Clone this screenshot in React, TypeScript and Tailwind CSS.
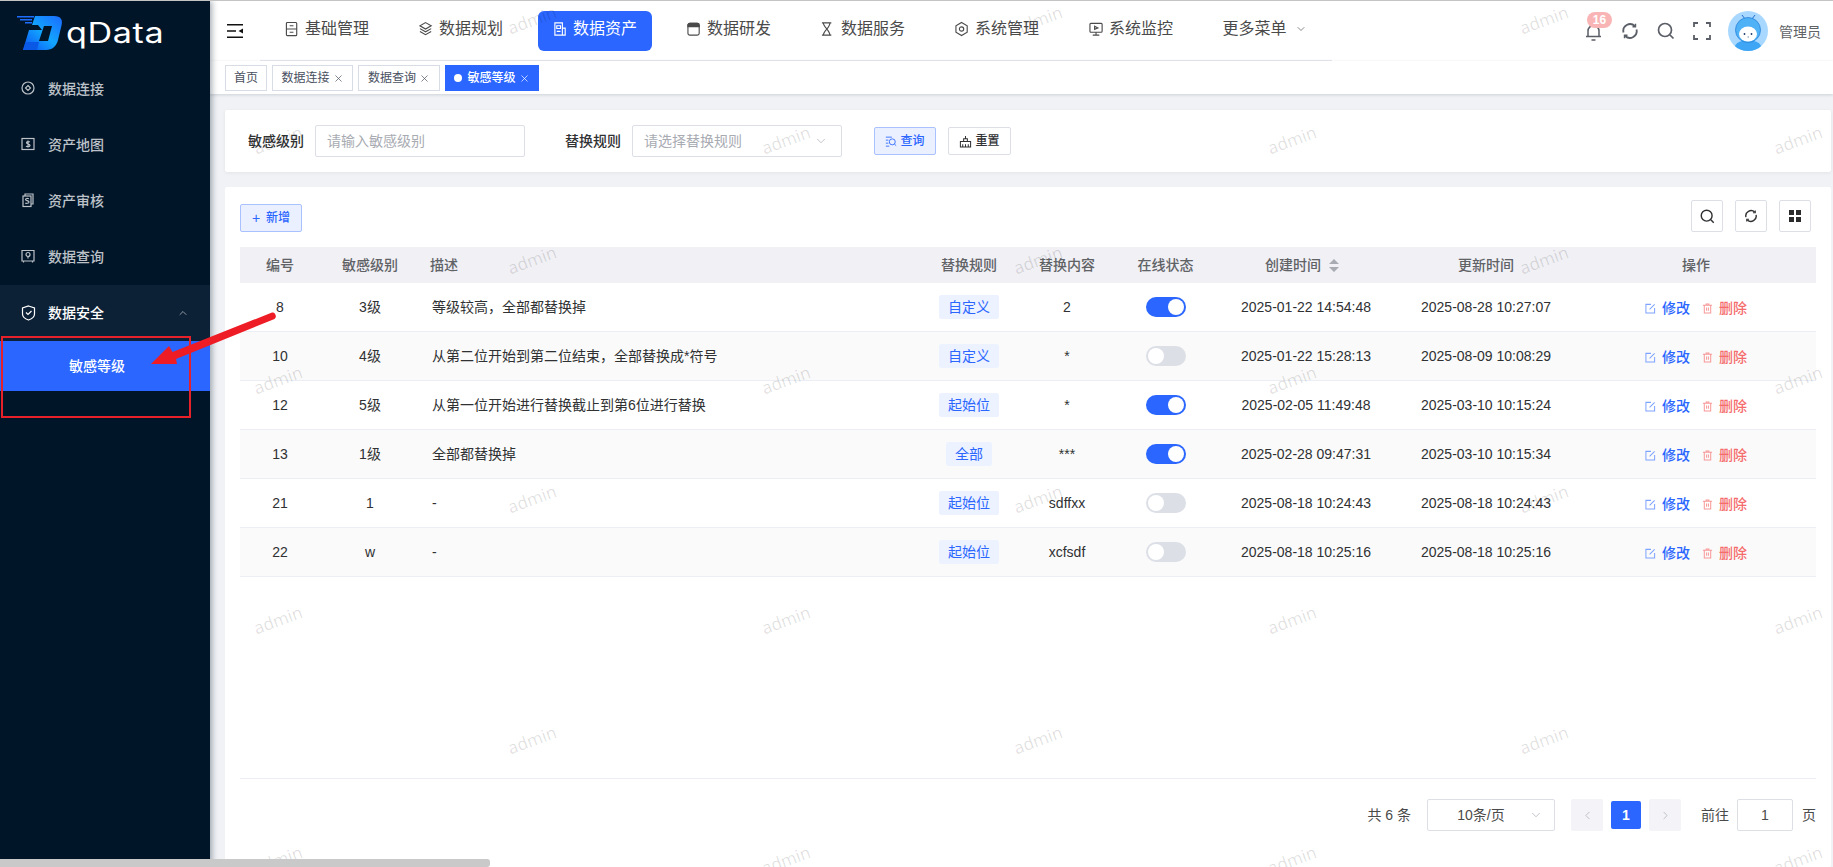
import type { ReactNode } from 'react';
import { ChevronDown, ChevronLeft, ChevronRight, ChevronUp, X } from 'lucide-react';

const navItems: { label: string; icon: ReactNode; active?: boolean }[] = [
  {
    label: '基础管理',
    icon: (
      <>
        <rect x="1.5" y="1" width="11" height="14" rx="1" />
        <path d="M1.5 8h11M5 4.5h4M5 11.5h4" />
      </>
    ),
  },
  {
    label: '数据规划',
    icon: <path d="M7 1.2 13 4.6 7 8 1 4.6ZM1 7.6 7 11 13 7.6M1 10.6 7 14 13 10.6" />,
  },
  {
    label: '数据资产',
    icon: (
      <>
        <path d="M10 14.5H2V1.5h8v13ZM10 7h3v7.5h-3" />
        <path d="M4 4.5h4v3H4ZM4 10.5h4" />
      </>
    ),
    active: true,
  },
  {
    label: '数据研发',
    icon: (
      <>
        <rect x="1" y="2" width="12" height="12.5" rx="2" />
        <path d="M1 5.5V4a2 2 0 0 1 2-2h8a2 2 0 0 1 2 2v1.5Z" fill="currentColor" />
      </>
    ),
  },
  {
    label: '数据服务',
    icon: <path d="M1 1.5h10M1 14.5h10M2.5 1.5c0 4 7 8 7 13M9.5 1.5c0 5-7 9-7 13" />,
  },
  {
    label: '系统管理',
    icon: (
      <>
        <path d="M7 1 13 4.5v7L7 15l-6-3.500v-7Z" />
        <circle cx="7" cy="8" r="2.300" />
      </>
    ),
  },
  {
    label: '系统监控',
    icon: (
      <>
        <rect x="1" y="2" width="13" height="9.500" rx="1" />
        <path d="M7.500 11.500V14.500M4 14.500h7M6 5l3.500 1.800L6 8.500Z" />
      </>
    ),
  },
];

const sideItems: { label: string; icon: ReactNode }[] = [
  {
    label: '数据连接',
    icon: (
      <>
        <circle cx="7" cy="7" r="6" />
        <path d="M7 4.500 9.500 7 7 9.500 4.500 7Z" />
      </>
    ),
  },
  {
    label: '资产地图',
    icon: (
      <>
        <rect x="1" y="1.500" width="12" height="11" />
        <path d="M8.800 5.200C8.300 4.500 5.500 4.300 5.500 5.800S9 7 9 8.500 5.700 10 5 9M7 3.500v7" />
      </>
    ),
  },
  {
    label: '资产审核',
    icon: (
      <>
        <path d="M4 3V1h8v10h-2" />
        <rect x="2" y="3" width="8" height="10.500" />
        <path d="M7.800 5.800C7 5.200 4.500 5.300 4.500 6.500S8 7.500 8 9 5 10.500 4.200 10" />
      </>
    ),
  },
  {
    label: '数据查询',
    icon: (
      <>
        <path d="M1 1.500h12v10.500H1ZM2.500 12v1.500M11.500 12v1.500" />
        <path d="M7 9.500V7.500" />
        <circle cx="7" cy="5.500" r="2" />
      </>
    ),
  },
];

type Row = {
  id: string;
  level: string;
  desc: string;
  rule: string;
  content: string;
  online: boolean;
  created: string;
  updated: string;
};

const rows: Row[] = [
  { id: '8', level: '3级', desc: '等级较高，全部都替换掉', rule: '自定义', content: '2', online: true, created: '2025-01-22 14:54:48', updated: '2025-08-28 10:27:07' },
  { id: '10', level: '4级', desc: '从第二位开始到第二位结束，全部替换成*符号', rule: '自定义', content: '*', online: false, created: '2025-01-22 15:28:13', updated: '2025-08-09 10:08:29' },
  { id: '12', level: '5级', desc: '从第一位开始进行替换截止到第6位进行替换', rule: '起始位', content: '*', online: true, created: '2025-02-05 11:49:48', updated: '2025-03-10 10:15:24' },
  { id: '13', level: '1级', desc: '全部都替换掉', rule: '全部', content: '***', online: true, created: '2025-02-28 09:47:31', updated: '2025-03-10 10:15:34' },
  { id: '21', level: '1', desc: '-', rule: '起始位', content: 'sdffxx', online: false, created: '2025-08-18 10:24:43', updated: '2025-08-18 10:24:43' },
  { id: '22', level: 'w', desc: '-', rule: '起始位', content: 'xcfsdf', online: false, created: '2025-08-18 10:25:16', updated: '2025-08-18 10:25:16' },
];

const watermarks = [19, 139, 259, 379, 498, 619, 739, 859].flatMap((y, i) =>
  (i % 2 === 0 ? [532, 1038, 1544] : [278, 786, 1292, 1798]).map((x) => ({ x, y }))
);

function Icon({ children, className }: { children: ReactNode; className?: string }) {
  return (
    <svg viewBox="0 0 16 16" fill="none" stroke="currentColor" strokeWidth="1.200" className={className}>
      {children}
    </svg>
  );
}

function RefreshIcon({ className }: { className?: string }) {
  return (
    <svg viewBox="0 0 18 18" fill="none" stroke="currentColor" strokeWidth="1.800" className={className}>
      <path d="M2.500 10.500A6.800 6.800 0 0 1 13.800 4M15.500 7.500A6.800 6.800 0 0 1 4.200 14" />
      <path d="M14.500 1.800v3h-3M3.500 16.200v-3h3" strokeWidth="1.400" />
    </svg>
  );
}

function SearchIcon({ className }: { className?: string }) {
  return (
    <svg viewBox="0 0 18 18" fill="none" stroke="currentColor" strokeWidth="1.700" className={className}>
      <circle cx="8" cy="8" r="6.500" />
      <path d="m13 13 3.500 3.500" />
    </svg>
  );
}

function Logo() {
  return (
    <svg viewBox="0 0 46 34" className="w-[46px] h-[34px]">
      <defs>
        <linearGradient id="logoGrad" x1="0" y1="1" x2="1" y2="0">
          <stop offset="0" stopColor="#0b4df0" />
          <stop offset="0.5" stopColor="#12a5ff" />
          <stop offset="1" stopColor="#1b6bff" />
        </linearGradient>
      </defs>
      <path d="M0 0h17v1.500H0ZM3 3h12v1.500H3ZM8 6h7v1.500H8Z" fill="#1d6dff" />
      <path d="M18 0h19c7 0 9 4 7.500 9.500L41 24c-1.500 6-5.500 10-12 10H6l6-20h13l-4-5h-6l3-9Z" fill="url(#logoGrad)" />
      <path d="M27 10h8l-4 15h-9Z" fill="#011528" />
      <path d="M6 34h14l2-8H8.500Z" fill="#0a58e6" />
    </svg>
  );
}

function Avatar() {
  return (
    <svg viewBox="0 0 40 40" className="w-10 h-10 rounded-full shrink-0">
      <rect width="40" height="40" fill="#a8d8ff" />
      <path d="M6 40c0-6 3-9 8-10h12c5 1 8 4 8 10Z" fill="#3ea6f5" />
      <path d="M14 4l3 4M27 4l-3 4" stroke="#1f6fd0" strokeWidth="1" />
      <circle cx="20" cy="19" r="12.500" fill="#4fb2f7" stroke="#2b82d8" strokeWidth="0.800" />
      <ellipse cx="20" cy="23" rx="9" ry="7.500" fill="#ffffff" />
      <circle cx="16.500" cy="23" r="0.900" fill="#1b3a6b" />
      <circle cx="23.500" cy="23" r="0.900" fill="#1b3a6b" />
      <path d="M19.500 26h1.500" stroke="#1b3a6b" strokeWidth="0.600" />
    </svg>
  );
}

const cols = 'grid grid-cols-[80px_100px_499px_100px_96px_101px_180px_180px_240px] items-center';

export default function App() {
  return (
    <div className="relative flex h-screen overflow-hidden border-t border-[#c4c4c4] bg-[#f0f2f5] font-['Liberation_Sans','Noto_Sans_CJK_SC',sans-serif] text-[14px] text-[#303133]">
      <aside className="z-10 flex w-[210px] shrink-0 flex-col bg-[#011528] shadow-[2px_0_6px_rgba(0,21,41,0.35)]">
        <div className="flex h-[60px] items-start gap-[3px] pl-[17px] pt-[15px]">
          <Logo />
          <span className="mt-[-3px] origin-left scale-x-[1.22] font-['Inter',sans-serif] text-[28px] leading-[40px] tracking-[0.5px] text-white">qData</span>
        </div>
        {sideItems.map((item) => (
          <div key={item.label} className="flex h-[56px] items-center gap-[13px] pl-[21px] font-medium text-[#bcc2c8]">
            <Icon className="h-[16px] w-[16px] shrink-0">{item.icon}</Icon>
            <span className="ml-[-2px]">{item.label}</span>
          </div>
        ))}
        <div className="flex h-[56px] items-center gap-[13px] bg-[#0d2136] pl-[21px] font-medium text-white">
          <Icon className="h-[16px] w-[16px] shrink-0">
            <path d="M7.500 1 13.500 3v6c0 3-3 5-6 6-3-1-6-3-6-6V3Z" />
            <path d="m5 7.500 2 2 3.500-3.500" />
          </Icon>
          <span className="ml-[-2px]">数据安全</span>
          <ChevronUp className="ml-[60px] h-[12px] w-[12px] text-[#b8bec5]" strokeWidth={1.500} />
        </div>
        <div className="flex h-[50px] items-center bg-[#2a66ff] pl-[69px] font-medium text-white">敏感等级</div>
      </aside>

      <div className="flex min-w-0 flex-1 flex-col">
        <header className="flex h-[60px] shrink-0 items-center bg-white pl-[17px] pr-[12px] shadow-[0_1px_3px_rgba(0,21,41,0.08)]">
          <svg viewBox="0 0 16 14" className="h-[14px] w-[16px] shrink-0" fill="none" stroke="#111" strokeWidth="1.500">
            <path d="M0 .8h16M0 7h9M0 13.200h16" />
            <path d="M11.500 7 16 4.500v5Z" fill="#111" stroke="none" />
          </svg>
          <nav className="ml-[17px] flex h-[60px] w-[1072px] shrink-0 items-center gap-[20px] border-b border-[#e4e7ed] px-[10px]">
            {navItems.map((item) => (
              <div
                key={item.label}
                className={
                  item.active
                    ? 'flex h-[40px] w-[114px] items-center justify-center gap-[5px] rounded-[6px] bg-[#2a66ff] pb-[4px] text-[16px] text-white'
                    : 'flex h-[40px] w-[114px] items-center justify-center gap-[5px] pb-[4px] text-[16px] text-[#4a4a4a]'
                }
              >
                <Icon className="h-[16px] w-[15px] shrink-0">{item.icon}</Icon>
                <span>{item.label}</span>
              </div>
            ))}
            <div className="flex h-[40px] w-[114px] items-center justify-center gap-[8px] pb-[4px] pr-[1px] text-[16px] text-[#4a4a4a]">
              <span>更多菜单</span>
              <ChevronDown className="h-[12px] w-[12px]" strokeWidth={1.300} />
            </div>
          </nav>
          <div className="ml-auto flex items-center text-[#5a5e66]">
            <div className="relative mr-[19px] mt-[2px] h-[18px] w-[17px]">
              <svg viewBox="0 0 17 18" fill="none" stroke="currentColor" strokeWidth="1.500" className="h-[18px] w-[17px]">
                <path d="M1 13.500h15M3 13.500V8a5.500 5.500 0 0 1 11 0v5.500M6.500 17h4" />
              </svg>
              <span className="absolute left-[2px] top-[-11px] flex h-[16px] w-[25px] items-center justify-center rounded-full bg-[#f9b5b5] text-[12px] font-bold text-white">16</span>
            </div>
            <RefreshIcon className="mr-[18px] h-[18px] w-[18px]" />
            <SearchIcon className="mr-[18px] h-[18px] w-[18px]" />
            <svg viewBox="0 0 18 18" fill="none" stroke="currentColor" strokeWidth="1.800" className="mr-[17px] h-[18px] w-[18px]">
              <path d="M1 5V1h4M13 1h4v4M17 13v4h-4M5 17H1v-4" />
            </svg>
            <Avatar />
            <span className="ml-[11px] mt-[2px] text-[#606266]">管理员</span>
          </div>
        </header>

        <div className="z-[1] flex h-[33px] shrink-0 items-start gap-[5px] bg-white pl-[15px] pt-[4px] text-[12px] text-[#495060] shadow-[0_1px_3px_rgba(0,21,41,0.15)]">
          <div className="flex h-[26px] w-[42px] items-center justify-center border border-[#d8dce5]">首页</div>
          <div className="flex h-[26px] w-[81px] items-center justify-center gap-[3px] border border-[#d8dce5]">
            数据连接
            <X className="h-[11px] w-[11px]" strokeWidth={1.500} />
          </div>
          <div className="flex h-[26px] w-[82px] items-center justify-center gap-[3px] border border-[#d8dce5]">
            数据查询
            <X className="h-[11px] w-[11px]" strokeWidth={1.500} />
          </div>
          <div className="flex h-[26px] w-[94px] items-center justify-center gap-[3px] bg-[#2a66ff] font-medium text-white">
            <span className="mr-[2px] h-[8px] w-[8px] rounded-full bg-white" />
            敏感等级
            <X className="h-[11px] w-[11px]" strokeWidth={1.500} />
          </div>
        </div>

        <main className="flex min-h-0 flex-1 flex-col pl-[15px] pr-[2px] pt-[16px]">
          <section className="flex h-[62px] shrink-0 items-center rounded-[2px] bg-white pl-[23px] shadow-[0_1px_4px_rgba(0,21,41,0.06)]">
            <label className="font-medium">敏感级别</label>
            <div className="ml-[11px] flex h-[32px] w-[210px] items-center rounded-[2px] border border-[#dcdfe6] pl-[11px] text-[#a8abb2]">请输入敏感级别</div>
            <label className="ml-[40px] font-medium">替换规则</label>
            <div className="ml-[11px] flex h-[32px] w-[210px] items-center justify-between rounded-[2px] border border-[#dcdfe6] pl-[11px] pr-[13px] text-[#a8abb2]">
              请选择替换规则
              <ChevronDown className="h-[14px] w-[14px]" strokeWidth={1.200} />
            </div>
            <button className="ml-[32px] flex h-[28px] w-[62px] items-center justify-center gap-[3px] rounded-[2px] border border-[#a9c1ff] bg-[#eaf0ff] text-[12px] font-medium text-[#2a66ff]">
              <svg viewBox="0 0 14 14" fill="none" stroke="currentColor" strokeWidth="1" className="h-[12px] w-[12px]">
                <path d="M1 2.500h7M1 6h3M1 9.500h3M1 13h4" />
                <circle cx="8.500" cy="8" r="3.500" />
                <path d="m11 10.500 2 2" />
              </svg>
              查询
            </button>
            <button className="ml-[12px] flex h-[28px] w-[63px] items-center justify-center gap-[3px] rounded-[2px] border border-[#dcdfe6] text-[12px] font-medium text-[#303133]">
              <svg viewBox="0 0 14 14" fill="none" stroke="currentColor" strokeWidth="1.100" className="h-[13px] w-[13px]">
                <path d="M1.500 7h11v6h-11ZM5 7V4h4v3M7 4V1M4 13v-3M7 13v-3M10 13v-3" />
              </svg>
              重置
            </button>
          </section>

          <section className="mt-[15px] flex min-h-0 flex-1 flex-col rounded-[2px] bg-white px-[15px] pt-[13px]">
            <div className="flex h-[32px] shrink-0 items-end justify-between">
              <button className="flex h-[28px] w-[62px] items-center justify-center gap-[6px] rounded-[2px] border border-[#a9c1ff] bg-[#eaf0ff] text-[12px] font-medium text-[#2a66ff]">
                <span className="text-[14px] font-normal leading-none">+</span>
                新增
              </button>
              <div className="mr-[5px] flex gap-[12px] text-[#303133]">
                <button className="flex h-[32px] w-[32px] items-center justify-center rounded-[2px] border border-[#dcdfe6]">
                  <SearchIcon className="h-[15px] w-[15px]" />
                </button>
                <button className="flex h-[32px] w-[32px] items-center justify-center rounded-[2px] border border-[#dcdfe6]">
                  <RefreshIcon className="h-[14px] w-[14px]" />
                </button>
                <button className="flex h-[32px] w-[32px] items-center justify-center rounded-[2px] border border-[#dcdfe6]">
                  <svg viewBox="0 0 12 12" className="h-[12px] w-[12px]" fill="#2a2a2a">
                    <path d="M0 0h5v5H0ZM7 0h5v5H7ZM0 7h5v5H0ZM7 7h5v5H7Z" />
                  </svg>
                </button>
              </div>
            </div>

            <div className="mt-[15px] h-[531px] shrink-0">
              <div className={`${cols} h-[36px] bg-[#f0f0f5] text-center font-medium text-[#606266]`}>
                <div>编号</div>
                <div>敏感级别</div>
                <div className="pl-[10px] text-left">描述</div>
                <div>替换规则</div>
                <div>替换内容</div>
                <div>在线状态</div>
                <div className="flex items-center justify-center gap-[8px] pr-[8px]">
                  创建时间
                  <svg viewBox="0 0 10 13" className="h-[13px] w-[10px]" fill="#a8abb2">
                    <path d="M5 0 10 5H0ZM5 13 0 8h10Z" />
                  </svg>
                </div>
                <div>更新时间</div>
                <div>操作</div>
              </div>
              {rows.map((row, i) => (
                <div key={row.id} className={`${cols} h-[49px] border-b border-[#ebeef5] text-center ${i % 2 === 1 ? 'bg-[#fafafa]' : ''}`}>
                  <div>{row.id}</div>
                  <div>{row.level}</div>
                  <div className="pl-[12px] text-left">{row.desc}</div>
                  <div className="flex justify-center">
                    <span className="flex h-[24px] items-center rounded-[2px] bg-[#ecf2ff] px-[9px] text-[#2a66ff]">{row.rule}</span>
                  </div>
                  <div>{row.content}</div>
                  <div className="flex justify-center">
                    {row.online ? (
                      <span className="flex h-[20px] w-[40px] items-center justify-end rounded-full bg-[#2a66ff] pr-[2px]">
                        <span className="h-[16px] w-[16px] rounded-full bg-white" />
                      </span>
                    ) : (
                      <span className="flex h-[20px] w-[40px] items-center rounded-full bg-[#dcdfe6] pl-[2px]">
                        <span className="h-[16px] w-[16px] rounded-full bg-white" />
                      </span>
                    )}
                  </div>
                  <div>{row.created}</div>
                  <div>{row.updated}</div>
                  <div className="flex items-center justify-center gap-[12px] pt-[2px] font-medium">
                    <span className="flex items-center gap-[6px] text-[#2a66ff]">
                      <svg viewBox="0 0 12 12" fill="none" stroke="#7da2ff" strokeWidth="1.100" className="h-[11px] w-[11px]">
                        <path d="M6.500 1.500H1v9.500h9.500V5.500M5 7l5.500-5.500" />
                      </svg>
                      修改
                    </span>
                    <span className="flex items-center gap-[6px] text-[#f56c6c]">
                      <svg viewBox="0 0 12 12" fill="none" stroke="#f89898" strokeWidth="1.100" className="h-[11px] w-[11px]">
                        <path d="M1 2.500h10M4.500 2.500V1h3v1.500M2.500 2.500V11h7V2.500M5 5v3.500M7 5v3.500" />
                      </svg>
                      删除
                    </span>
                  </div>
                </div>
              ))}
            </div>

            <div className="flex shrink-0 items-center justify-end border-t border-[#ebeef5] pt-[20px] text-[#4a4a4a]">
              <span className="mr-[16px]">共 6 条</span>
              <div className="relative mr-[16px] flex h-[32px] w-[128px] items-center justify-center rounded-[2px] border border-[#dcdfe6] pr-[20px]">
                10条/页
                <ChevronDown className="absolute right-[11px] h-[14px] w-[14px] text-[#a8abb2]" strokeWidth={1.200} />
              </div>
              <div className="mr-[8px] flex h-[32px] w-[32px] items-center justify-center rounded-[2px] bg-[#f4f4f8] text-[#a8abb2]">
                <ChevronLeft className="h-[13px] w-[13px]" strokeWidth={1.300} />
              </div>
              <div className="mr-[8px] flex h-[28px] w-[30px] items-center justify-center rounded-[2px] bg-[#2a66ff] font-bold text-white">1</div>
              <div className="mr-[20px] flex h-[32px] w-[32px] items-center justify-center rounded-[2px] bg-[#f4f4f8] text-[#a8abb2]">
                <ChevronRight className="h-[13px] w-[13px]" strokeWidth={1.300} />
              </div>
              <span className="mr-[8px]">前往</span>
              <div className="mr-[9px] flex h-[32px] w-[56px] items-center justify-center rounded-[2px] border border-[#dcdfe6]">1</div>
              <span>页</span>
            </div>
          </section>
        </main>
      </div>

      {/* watermark */}
      <div className="pointer-events-none absolute inset-0 z-20 select-none">
        {watermarks.map((m) => (
          <span
            key={`${m.x}-${m.y}`}
            className="absolute -translate-x-1/2 -translate-y-1/2 -rotate-[20deg] font-['Open_Sans',sans-serif] text-[17px] text-black/[.13]"
            style={{ left: m.x, top: m.y }}
          >
            admin
          </span>
        ))}
      </div>

      {/* annotation drawn on the screenshot */}
      <div className="pointer-events-none absolute left-[1px] top-[335px] z-30 h-[82px] w-[190px] border-2 border-[#e8202a]" />
      <svg className="pointer-events-none absolute left-[140px] top-[300px] z-30 h-[80px] w-[150px]" viewBox="0 0 150 80">
        <path d="M11 63 29 45 32.500 51 132 11.500c3-1 5.500 4.500 2.500 6.500L36 58 37 63Z" fill="#ee1c25" />
      </svg>

      {/* page scrollbar */}
      <div className="absolute bottom-0 left-0 z-40 h-[8px] w-[490px] rounded-r-[3px] bg-[#c9c9c9]" />
    </div>
  );
}
